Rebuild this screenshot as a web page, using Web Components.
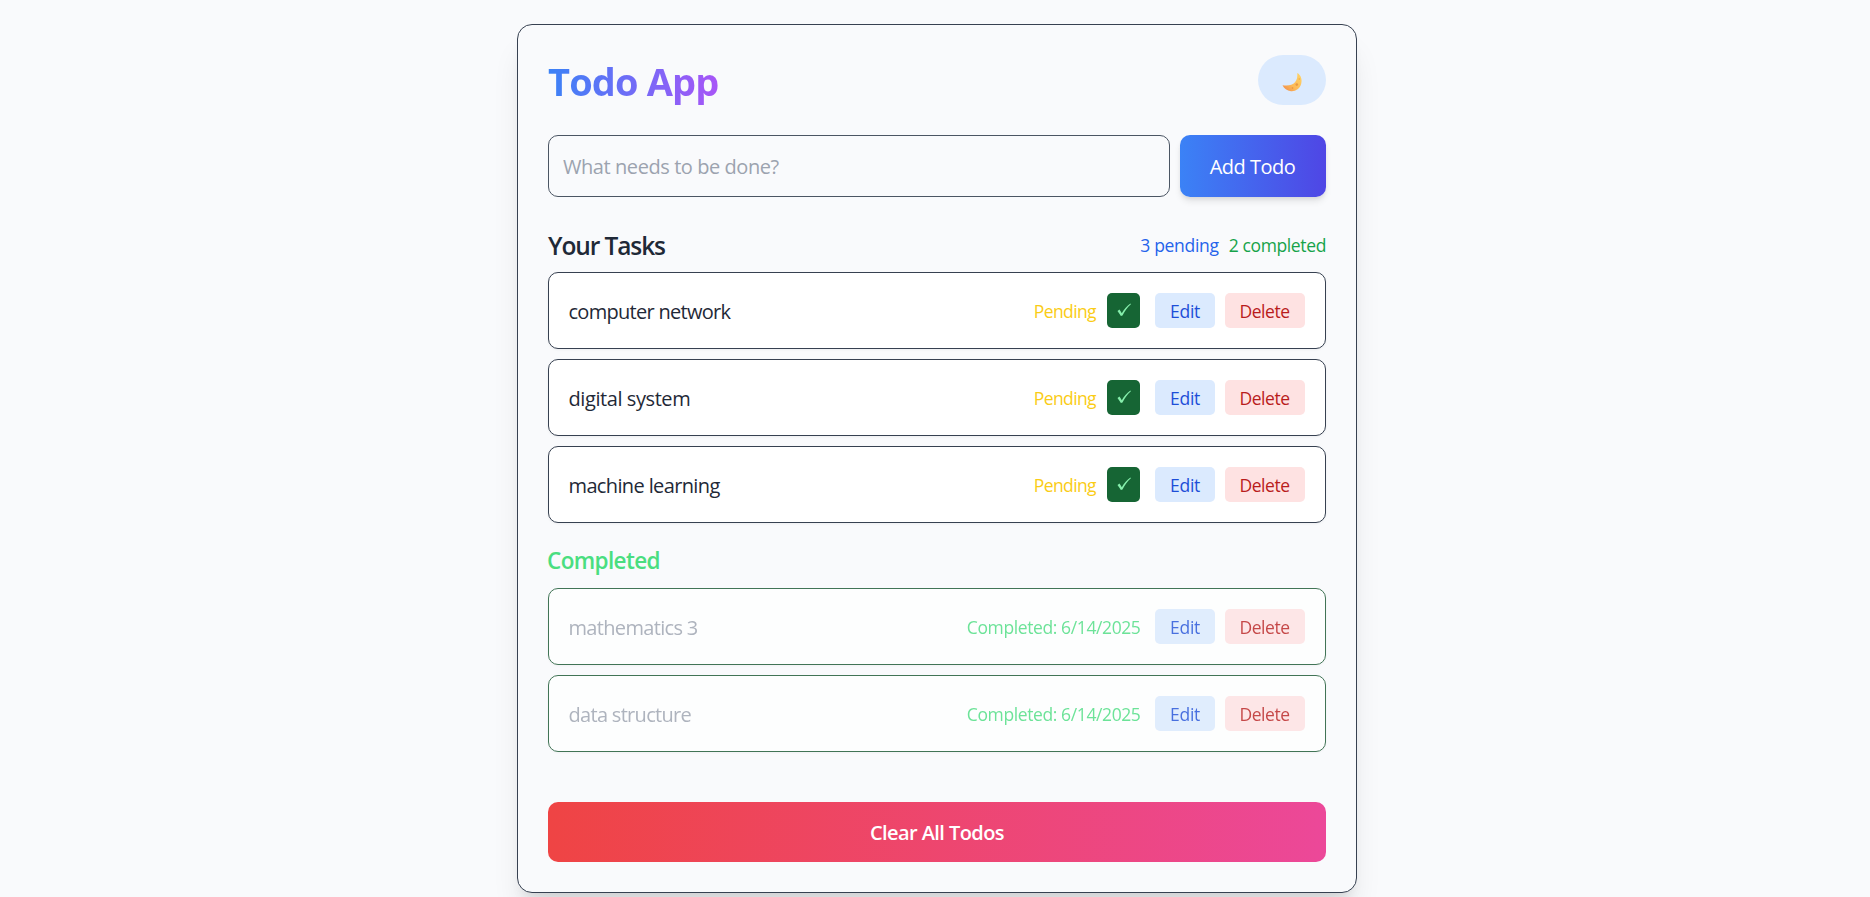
<!DOCTYPE html>
<html lang="en">
<head>
<meta charset="utf-8">
<title>Todo App</title>
<style>
  html, body { height: 100%; overflow: hidden; }
  body { margin: 0; background: #f9fafb; background: #f9fafc; font-family: "Open Sans", "Noto Sans", sans-serif; color: #1f2937; }
</style>
</head>
<body>
<todo-card>
  <todo-header slot="header">Todo App</todo-header>
  <todo-form slot="form"></todo-form>
  <section-head slot="pending" pending="3 pending" completed="2 completed">Your Tasks</section-head>
  <todo-item slot="pending" style="--ls:-.71px">computer network</todo-item>
  <todo-item slot="pending" style="--ls:-.42px">digital system</todo-item>
  <todo-item slot="pending" style="--ls:-.63px">machine learning</todo-item>
  <section-head slot="done" done>Completed</section-head>
  <todo-item slot="done" done="6/14/2025" style="--ls:-.67px">mathematics 3</todo-item>
  <todo-item slot="done" done="6/14/2025" style="--ls:-.69px">data structure</todo-item>
  <clear-button slot="footer">Clear All Todos</clear-button>
</todo-card>
<script>
function define(name, render) {
  customElements.define(name, class extends HTMLElement {
    constructor() { super(); this.attachShadow({ mode: 'open' }); }
    connectedCallback() { this.shadowRoot.innerHTML = render(this); }
  });
}

define('todo-card', () => `
<style>
  :host { display: flex; flex-direction: column; box-sizing: border-box; width: 840px; height: 869px; margin: 24px 0 0 517px;
    padding: 30px; border: 1px solid #374151; border-radius: 15px; background: #f9fafc;
    box-shadow: 0 25px 31px -6px rgba(0,0,0,.1), 0 10px 12.500px -7.500px rgba(0,0,0,.1); }
  .list { display: flex; flex-direction: column; gap: 10px; }
  .pending { padding-top: 34px; }
  .done { padding-top: 22px; }
  footer { margin-top: 50px; }
</style>
<slot name="header"></slot>
<slot name="form"></slot>
<div class="list pending"><slot name="pending"></slot></div>
<div class="list done"><slot name="done"></slot></div>
<footer><slot name="footer"></slot></footer>`);

define('todo-header', () => `
<style>
  :host { display: flex; justify-content: space-between; height: 50px; margin-bottom: 30px; }
  h1 { margin: 0; padding-top: 1px; font-size: 38px; line-height: 50px; height: 50px; font-weight: 700; letter-spacing: -.85px;
    background: linear-gradient(to right, #3b82f6, #a855f7); -webkit-background-clip: text; background-clip: text; color: transparent; }
  button { width: 68px; height: 50px; border: 0; border-radius: 25px; padding: 0; background: #dbeafe; display: grid; place-items: center; }
  svg { display: block; }
</style>
<h1><slot></slot></h1>
<button aria-label="Toggle theme">
  <svg width="24" height="24" viewBox="0 0 24 24">
    <defs><linearGradient id="m" x1="1" y1="0" x2="0" y2="1"><stop offset="0" stop-color="#ffd667"/><stop offset=".6" stop-color="#fcb958"/><stop offset="1" stop-color="#ee8548"/></linearGradient></defs>
    <path d="M17.300 5C20.800 7 22.400 11.300 21.200 15.800C19.800 20.800 15.500 23.600 11 23.200C7 22.900 4 20.500 2.500 17.300C8 18 12.500 17.300 15 14.300C17.200 11.700 17.600 8.500 17.300 5Z" fill="url(#m)"/>
    <circle cx="16.800" cy="16.600" r="1.300" fill="#e99a45"/><circle cx="12.500" cy="20" r=".9" fill="#e99a45"/><circle cx="19.300" cy="11" r=".8" fill="#eea84c"/>
  </svg>
</button>`);

define('todo-form', () => `
<style>
  :host { display: flex; gap: 10px; height: 62px; }
  input { flex: 1; min-width: 0; box-sizing: border-box; padding: 0 14px; border: 1px solid #4b5563; border-radius: 10px; background: transparent;
    font: 400 20px "Open Sans", sans-serif; letter-spacing: -.43px; }
  input::placeholder { color: #9ca3af; opacity: 1; }
  button { width: 146px; padding: 0 1px 0 0; border: 0; border-radius: 10px; color: #fff; font: 500 20px "Open Sans", sans-serif; letter-spacing: -.5px;
    background: linear-gradient(to right, #3b82f6, #4f46e5); box-shadow: 0 5px 7.500px -1px rgba(0,0,0,.1), 0 2.500px 5px -2.500px rgba(0,0,0,.1); }
</style>
<input placeholder="What needs to be done?"><button>Add Todo</button>`);

define('section-head', el => `
<style>
  :host { display: flex; justify-content: space-between; align-items: center; height: 30px; margin-bottom: 1px; }
  :host([done]) { margin-bottom: 3px; }
  h2 { margin: 0; font-size: 24.500px; line-height: 30px; font-weight: 560; letter-spacing: -1.1px; color: #1f2937; }
  :host([done]) h2 { padding-top: 2px; font-size: 22.500px; font-weight: 600; letter-spacing: -.63px; color: #4ade80; margin-left: -1px; }
  p { margin: 0 0 2px; display: flex; gap: 10px; font-size: 17.500px; line-height: 28px; }
  .p { color: #2563eb; letter-spacing: -.3px; } .c { color: #16a34a; letter-spacing: -.37px; }
</style>
<h2><slot></slot></h2>
${el.hasAttribute('pending') ? `<p><span class="p">${el.getAttribute('pending')}</span><span class="c">${el.getAttribute('completed')}</span></p>` : ''}`);

define('todo-item', el => {
  const done = el.getAttribute('done');
  return `
<style>
  :host { display: flex; align-items: center; box-sizing: border-box; height: 77px; padding: 0 20px; border: 1px solid #374151; border-radius: 10px;
    background: #fff; box-shadow: 0 1px 2.500px rgba(0,0,0,.05); }
  :host([done]) { opacity: .8; border-color: #14532d; }
  .name { flex: 1; margin-left: -.5px; padding-top: 1px; font-size: 20px; letter-spacing: var(--ls); color: #1f2937; }
  :host([done]) .name { color: #9ca3af; }
  .status { font-size: 17.500px; padding-top: 1px; color: #facc15; letter-spacing: -.6px; margin-right: 11px; }
  :host([done]) .status { color: #4ade80; letter-spacing: -.39px; margin-right: 14.500px; }
  button { box-sizing: border-box; height: 35px; border: 0; border-radius: 5px; padding: 1px 0 0; font: 400 17.500px "Open Sans", sans-serif; }
  .check { width: 33px; background: #166534; margin-right: 15px; padding: 0; display: grid; place-items: center; }
  .edit { width: 60px; background: #dbeafe; color: #1d4ed8; margin-right: 10px; letter-spacing: -.27px; }
  .delete { width: 80px; padding-right: 1px; background: #fee2e2; color: #b91c1c; letter-spacing: -.46px; }
</style>
<span class="name"><slot></slot></span>
<span class="status">${done ? 'Completed: ' + done : 'Pending'}</span>
${done ? '' : `<button class="check" aria-label="Complete"><svg width="33" height="35" viewBox="0 0 33 35"><path d="M10.500 17.900L12.500 16.600L14.800 20.300C17.200 16.300 20 13 23.400 10.600L23.900 11.200C20.600 14.100 17.800 18 15.500 22.500L13.900 23Z" fill="#86efac"/></svg></button>`}
<button class="edit">Edit</button><button class="delete">Delete</button>`;
});

define('clear-button', () => `
<style>
  :host { display: block; }
  button { width: 100%; height: 60px; padding: 0; border: 0; border-radius: 10px; color: #fff; font: 640 20px "Open Sans", sans-serif; letter-spacing: -.58px;
    background: linear-gradient(to right, #ef4444, #ec4899); }
</style>
<button><slot></slot></button>`);
</script>
</body>
</html>
